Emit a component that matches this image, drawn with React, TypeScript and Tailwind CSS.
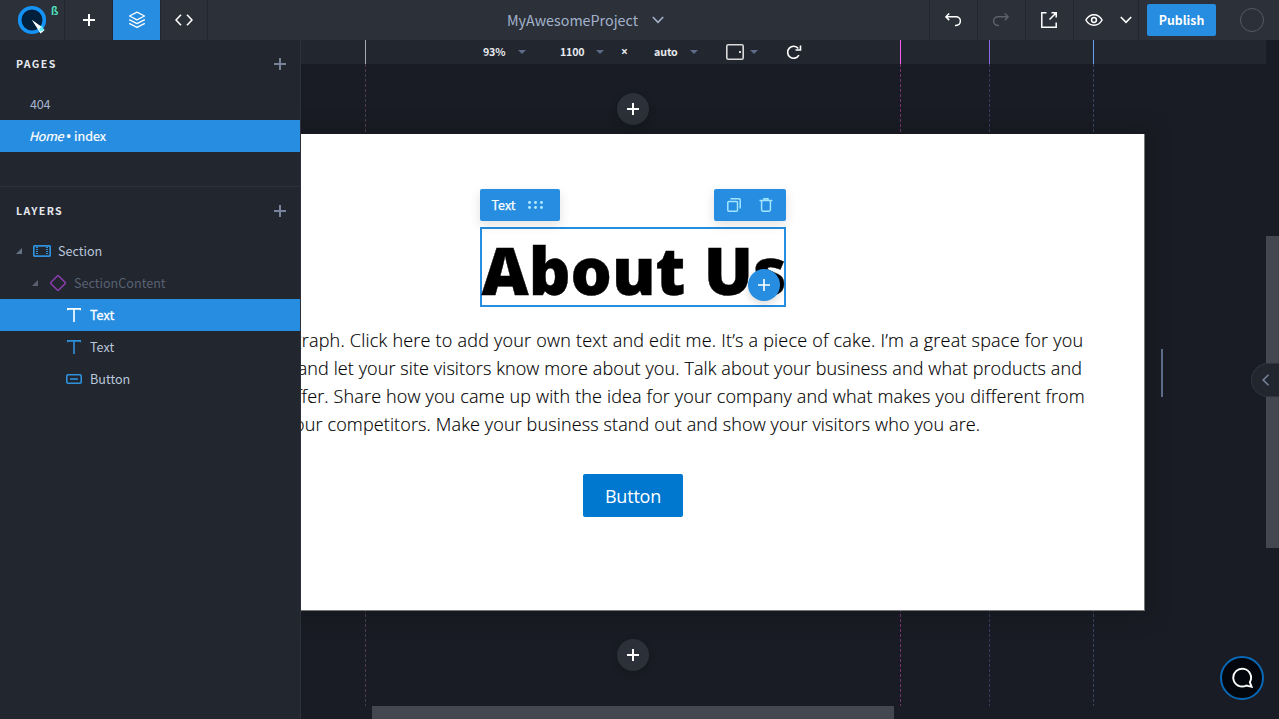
import React from "react";

const UI = "font-['Noto_Sans_CJK_SC','Noto_Sans',sans-serif]";

function Plus({ size = 12, width = 2 }: { size?: number; width?: number }) {
  return (
    <svg width={size} height={size} viewBox="0 0 12 12" stroke="currentColor" strokeWidth={width} fill="none">
      <path d="M6 0v12M0 6h12" />
    </svg>
  );
}

function Caret({ className = "" }: { className?: string }) {
  return (
    <svg width="8" height="4" viewBox="0 0 8 4" fill="#5c6b87" className={className}>
      <path d="M0 0h8L4 4z" />
    </svg>
  );
}

function Chevron({ className = "" }: { className?: string }) {
  return (
    <svg width="12" height="8" viewBox="0 0 12 8" fill="none" stroke="currentColor" strokeWidth="1.6" className={className}>
      <path d="M.8 1 6 6.4 11.2 1" />
    </svg>
  );
}

function Logo() {
  return (
    <svg width="44" height="32" viewBox="0 0 44 32" className="ml-4">
      <circle cx="16" cy="16" r="12.3" fill="#02203c" stroke="#1593f5" strokeWidth="3.6" />
      <path d="M16 16l12.7 10-4.2 3.4z" fill="#fff" />
      <path d="M21.5 23.3l4.5-1.2 2 4.2-3.8 1.2z" fill="#62ecfb" />
      <path d="M16 16l9.2 6.6-2.2 3z" fill="#fff" />
    </svg>
  );
}

function Header() {
  return (
    <header className="flex h-10 shrink-0 bg-[#2c3038] text-white">
      <div className="relative flex w-[65px] shrink-0 items-center border-r border-[#22262e]">
        <Logo />
        <span className="absolute left-[51px] top-[3px] text-[10.5px] font-bold leading-4 text-[#4fe3c1]">ß</span>
      </div>
      <div className="flex w-12 items-center justify-center border-r border-[#22262e]"><Plus /></div>
      <div className="flex w-[48px] items-center justify-center border-r border-[#22262e] bg-[#268de0]">
        <svg width="18" height="18" viewBox="0 0 18 18" fill="none" stroke="currentColor" strokeWidth="1.3" strokeLinejoin="round">
          <path d="M9 1.2 16.5 5 9 8.8 1.5 5z" />
          <path d="M1.2 8.7 9 12.6l7.8-3.9M1.2 12.4 9 16.4l7.8-4" />
        </svg>
      </div>
      <div className="flex w-[47px] items-center justify-center border-r border-[#22262e]">
        <svg width="18" height="12" viewBox="0 0 18 12" fill="none" stroke="currentColor" strokeWidth="1.6">
          <path d="M6 .7 1 6l5 5.3M12 .7 17 6l-5 5.3" />
        </svg>
      </div>
      <div className="flex flex-1 items-center pl-[299px] text-[#a3b3cc]">
        <span className="w-[132px] whitespace-nowrap text-[14.3px] leading-5">MyAwesomeProject</span>
        <Chevron className="ml-[13px]" />
      </div>
      <div className="flex w-[49px] items-center border-x border-[#22262e] pl-[15px]">
        <svg width="16" height="14" viewBox="0 0 16 14" fill="none" stroke="currentColor" strokeWidth="1.5">
          <path d="M4.2.5.9 3.8l3.300 3.300M1 3.800h10.100a4.300 4.300 0 0 1 0 8.600H10" />
        </svg>
      </div>
      <div className="flex w-12 items-center border-r border-[#22262e] pl-[15px] text-[#5c6069]">
        <svg width="16" height="14" viewBox="0 0 16 14" fill="none" stroke="currentColor" strokeWidth="1.5">
          <path d="m11.800.5 3.300 3.300-3.300 3.300M15 3.800H4.900a4.300 4.300 0 0 0 0 8.600H6" />
        </svg>
      </div>
      <div className="flex w-12 items-center border-r border-[#22262e] pl-[15px]">
        <svg width="16" height="16" viewBox="0 0 16 16" fill="none" stroke="currentColor" strokeWidth="1.5">
          <path d="M5.500.8H.8v14.400h14.400V10.500M10.500.8h4.700v4.700M15 1 8.500 7.500" />
          <path d="M12 0h4v4z" fill="currentColor" stroke="none" />
        </svg>
      </div>
      <div className="flex w-[65px] items-center border-r border-[#22262e] pl-[11px]">
        <svg width="18" height="12" viewBox="0 0 18 12" fill="none" stroke="currentColor" strokeWidth="1.5">
          <path d="M.9 6C4.9-1 13.1-1 17.1 6 13.1 13 4.900 13 .9 6z" />
          <circle cx="9" cy="6" r="2.4" />
        </svg>
        <Chevron className="ml-[17px]" />
      </div>
      <div className="flex w-[140px] items-center pl-2">
        <button className="h-8 w-[69px] rounded-[2px] bg-[#268de0] text-[12.3px] font-bold leading-5">Publish</button>
        <span className="ml-6 h-6 w-6 rounded-full border border-[#565a64]" />
      </div>
    </header>
  );
}

function PanelTitle({ children }: { children: React.ReactNode }) {
  return (
    <div className="flex h-12 items-center justify-between pl-4 pr-[14px] text-[#77839b]">
      <h2 className="text-[10.6px] font-bold leading-4 tracking-[1.35px] text-[#e6e9ee]">{children}</h2>
      <Plus />
    </div>
  );
}

function Twisty() {
  return (
    <svg width="6" height="6" viewBox="0 0 6 6" fill="currentColor">
      <path d="M6 0v6H0z" />
    </svg>
  );
}

function TextIcon() {
  return (
    <svg width="14" height="14" viewBox="0 0 14 14" fill="none" stroke="currentColor" strokeWidth="1.6">
      <path d="M.5 2.200V.9h13v1.300M7 .9V14" />
    </svg>
  );
}

function Sidebar() {
  return (
    <aside className="w-[301px] shrink-0 border-r border-[#2c3038] bg-[#22262e] text-[12.6px] leading-5 text-[#bac7dc]">
      <section className="h-[147px] border-b border-[#2c3038]">
        <PanelTitle>PAGES</PanelTitle>
        <div className="flex h-8 items-center pl-[30px] tracking-[-0.2px] text-[#a3b3cc]">404</div>
        <div className="flex h-8 items-center bg-[#268de0] pl-[29px] text-white [-webkit-text-stroke:0.2px_white]">
          <i className="w-[37px] tracking-[-0.3px]">Home</i>
          <span className="w-2 pt-px font-['Noto_Sans',sans-serif] text-[14px]">•</span>
          <span>index</span>
        </div>
      </section>
      <section>
        <PanelTitle>LAYERS</PanelTitle>
        <div className="flex h-8 items-center pl-4">
          <span className="text-[#667085]"><Twisty /></span>
          <svg width="18" height="12" viewBox="0 0 18 12" fill="none" stroke="#2f91dc" className="ml-[11px]">
            <rect x=".8" y=".8" width="16.400" height="10.400" rx="1" strokeWidth="1.700" />
            <path d="M4 2v8M14 2v8" strokeWidth="2" strokeDasharray="1 1" />
          </svg>
          <span className="ml-[7px]">Section</span>
        </div>
        <div className="flex h-8 items-center pl-8 text-[#596273]">
          <Twisty />
          <svg width="18" height="18" viewBox="0 0 18 18" fill="none" stroke="#8d3fb0" strokeWidth="1.5" className="ml-[11px]">
            <rect x="3.500" y="3.500" width="11" height="11" rx="1" transform="rotate(45 9 9)" />
          </svg>
          <span className="ml-[7px]">SectionContent</span>
        </div>
        <div className="flex h-8 items-center gap-[9px] bg-[#268de0] pl-[67px] text-white [-webkit-text-stroke:0.3px_white]"><TextIcon />Text</div>
        <div className="flex h-8 items-center gap-[9px] pl-[67px]"><span className="text-[#2f91dc]"><TextIcon /></span>Text</div>
        <div className="flex h-8 items-center gap-2 pl-[66px]">
          <svg width="16" height="10" viewBox="0 0 16 10" fill="none" stroke="#2f91dc" strokeWidth="1.6">
            <rect x=".8" y=".8" width="14.400" height="8.400" rx="1.200" />
            <path d="M4 5h8" />
          </svg>
          Button
        </div>
      </section>
    </aside>
  );
}

function Ruler() {
  return (
    <div className="relative flex h-6 w-[965px] shrink-0 items-center bg-[#22262e] text-[10.7px] font-bold leading-4 text-[#e6e9ee]">
      <span className="ml-[182px] w-[35px] tracking-[-0.2px]">93%</span><Caret />
      <span className="ml-[34px] w-9 tracking-[-0.2px]">1100</span><Caret />
      <span className="ml-[17px] w-[13px] font-['Noto_Sans',sans-serif] text-[12px]">×</span>
      <span className="ml-[20px] w-[35px] tracking-[-0.1px]">auto</span><Caret className="ml-px" />
      <svg width="18" height="16" viewBox="0 0 18 16" fill="none" stroke="#d9d9d9" strokeWidth="1.600" className="ml-[28px]">
        <rect x=".8" y=".8" width="16.400" height="14.400" rx="1.500" />
        <path d="M13 8h2" strokeWidth="2" />
      </svg>
      <Caret className="ml-[6px]" />
      <svg width="16" height="15" viewBox="0 0 16 15" fill="none" stroke="#fff" strokeWidth="1.600" className="ml-7">
        <path d="M12.900 10.200A6 6 0 1 1 12.300 3.500M9.500 5h5V.4" />
      </svg>
      <i className="absolute left-[64px] top-0 h-6 w-px bg-[#a7abb3]" />
      <i className="absolute left-[599px] top-0 h-6 w-px bg-[#f957f0]" />
      <i className="absolute left-[688px] top-0 h-6 w-px bg-[#9066ea]" />
      <i className="absolute left-[792px] top-0 h-6 w-px bg-[#62a1f4]" />
    </div>
  );
}

function AddSection({ className = "" }: { className?: string }) {
  return (
    <button className={"flex h-8 w-8 shrink-0 items-center justify-center rounded-full bg-[#2c3038] text-white shadow-[0_2px_8px_rgba(0,0,0,.2)] " + className}>
      <Plus />
    </button>
  );
}

function Selection() {
  return (
    <div className="relative mt-[93px] h-20 w-[306px] border-2 border-[#268de0]">
      <div className={"absolute -left-[2px] -top-10 flex h-8 w-20 items-center rounded-[2px] bg-[#268de0] pl-3 text-[12.5px] leading-4 text-white shadow-[0_4px_12px_rgba(0,0,0,.12)] [-webkit-text-stroke:0.25px_white] " + UI}>
        <span className="w-9">Text</span>
        <svg width="16" height="8" viewBox="0 0 16 8" fill="#b6ecff">
          <circle cx="1.500" cy="1.500" r="1.400" /><circle cx="7.500" cy="1.500" r="1.400" /><circle cx="13.500" cy="1.500" r="1.400" />
          <circle cx="1.500" cy="6.500" r="1.400" /><circle cx="7.500" cy="6.500" r="1.400" /><circle cx="13.500" cy="6.500" r="1.400" />
        </svg>
      </div>
      <div className="absolute -right-[2px] -top-10 flex h-8 w-[72px] items-center gap-[18px] rounded-[2px] bg-[#268de0] pl-[13px] text-[#a3e6ff] shadow-[0_4px_12px_rgba(0,0,0,.12)]">
        <svg width="14" height="14" viewBox="0 0 14 14" fill="none" stroke="currentColor" strokeWidth="1.500">
          <rect x=".8" y="3.500" width="9.700" height="9.700" rx="1" />
          <path d="M3.500.8H12a1.200 1.200 0 0 1 1.200 1.200v8.500" />
        </svg>
        <svg width="14" height="14" viewBox="0 0 14 14" fill="none" stroke="currentColor" strokeWidth="1.500">
          <path d="M.5 2.600h13M2.600 2.600v9.200a1.400 1.400 0 0 0 1.400 1.400h6a1.400 1.400 0 0 0 1.400-1.400V2.600M5 2.500V.8h4v1.700" />
        </svg>
      </div>
      <h1 className="flex h-full items-center whitespace-nowrap pt-1.5 font-['Noto_Sans','Open_Sans',sans-serif] text-[65px] font-black leading-[76px] text-black [-webkit-text-stroke:0.4px_black] [word-spacing:1.5px]">About Us</h1>
      <button className="absolute left-[266px] top-10 flex h-8 w-8 items-center justify-center rounded-full bg-[#268de0] text-white shadow-[0_3px_7px_rgba(0,0,0,.15)]"><Plus width={1.6} /></button>
    </div>
  );
}

function Page() {
  return (
    <article className="relative flex h-[477px] w-[1024px] shrink-0 flex-col items-center border-b border-r border-[#717876] bg-white font-['Open_Sans','Noto_Sans',sans-serif] text-black shadow-[0_0_24px_4px_rgba(0,0,0,.16)]">
      <Selection />
      <div className="mt-[19px] flex flex-col items-center whitespace-nowrap text-[18px] font-light leading-7 [-webkit-text-stroke:0.15px_black]">
        <p className="pl-[2px] tracking-[0.22px]">This is a paragraph. Click here to add your own text and edit me. It’s a piece of cake. I’m a great space for you</p>
        <p className="pl-1 tracking-[0.1px]">to tell a story and let your site visitors know more about you. Talk about your business and what products and</p>
        <p className="tracking-[0.15px]">services you offer. Share how you came up with the idea for your company and what makes you different from</p>
        <p className="pl-px tracking-[0.13px]">your competitors. Make your business stand out and show your visitors who you are.</p>
      </div>
      <button className="mt-9 h-[43px] w-[100px] rounded-[2px] bg-[#0078d0] pl-px text-[18px] leading-6 tracking-[-0.2px] text-white">Button</button>
    </article>
  );
}

function Guide({ className }: { className: string }) {
  return <i className={"absolute top-0 h-full w-px " + className} />;
}

function Workspace() {
  return (
    <main className="relative flex min-w-0 flex-1 flex-col bg-[#191c24]">
      <Ruler />
      <div className="relative h-[642px] w-[965px] overflow-hidden">
        <Guide className="left-[64px] bg-[repeating-linear-gradient(#4d3a50_0_3px,transparent_3px_5px)]" />
        <Guide className="left-[599px] bg-[repeating-linear-gradient(#72356c_0_3px,transparent_3px_5px)]" />
        <Guide className="left-[688px] bg-[repeating-linear-gradient(#3d3860_0_3px,transparent_3px_5px)]" />
        <Guide className="left-[792px] bg-[repeating-linear-gradient(#34455f_0_3px,transparent_3px_5px)]" />
        <div className="-ml-[180px] flex w-[1024px] flex-col items-center">
          <AddSection className="mt-[29px] mb-[9px]" />
          <Page />
          <AddSection className="mt-7" />
        </div>
        <i className="absolute left-[860px] top-[285px] h-12 w-[2px] bg-[#5c6b87]" />
      </div>
      <div className="h-[13px] pl-[71px]"><div className="h-full w-[522px] bg-[#444750]" /></div>
      <div className="absolute right-0 top-[196px] h-[312px] w-[13px] bg-[#444750]" />
      <div className="absolute right-0 top-[323px] flex h-[34px] w-7 items-center rounded-l-full border border-r-0 border-[#30343c] bg-[#22262e] pl-[10px] text-[#77839b]">
        <svg width="8" height="12" viewBox="0 0 8 12" fill="none" stroke="currentColor" strokeWidth="1.600"><path d="M6.500.8 1.200 6l5.300 5.200" /></svg>
      </div>
      <button className="absolute bottom-[19px] right-[15px] flex h-11 w-11 items-center justify-center rounded-full border-2 border-[#0869b6] bg-[#03060d]">
        <svg width="22" height="22" viewBox="0 0 22 22" fill="none" stroke="#fff" strokeWidth="1.900">
          <path d="M18.800 15.200A8.900 8.900 0 1 0 15.300 18.500L20.600 19.800z" strokeLinejoin="miter" />
        </svg>
      </button>
    </main>
  );
}

export default function App() {
  return (
    <div className={"flex h-[719px] w-[1279px] flex-col overflow-hidden bg-[#191c24] " + UI}>
      <Header />
      <div className="flex min-h-0 flex-1">
        <Sidebar />
        <Workspace />
      </div>
    </div>
  );
}
